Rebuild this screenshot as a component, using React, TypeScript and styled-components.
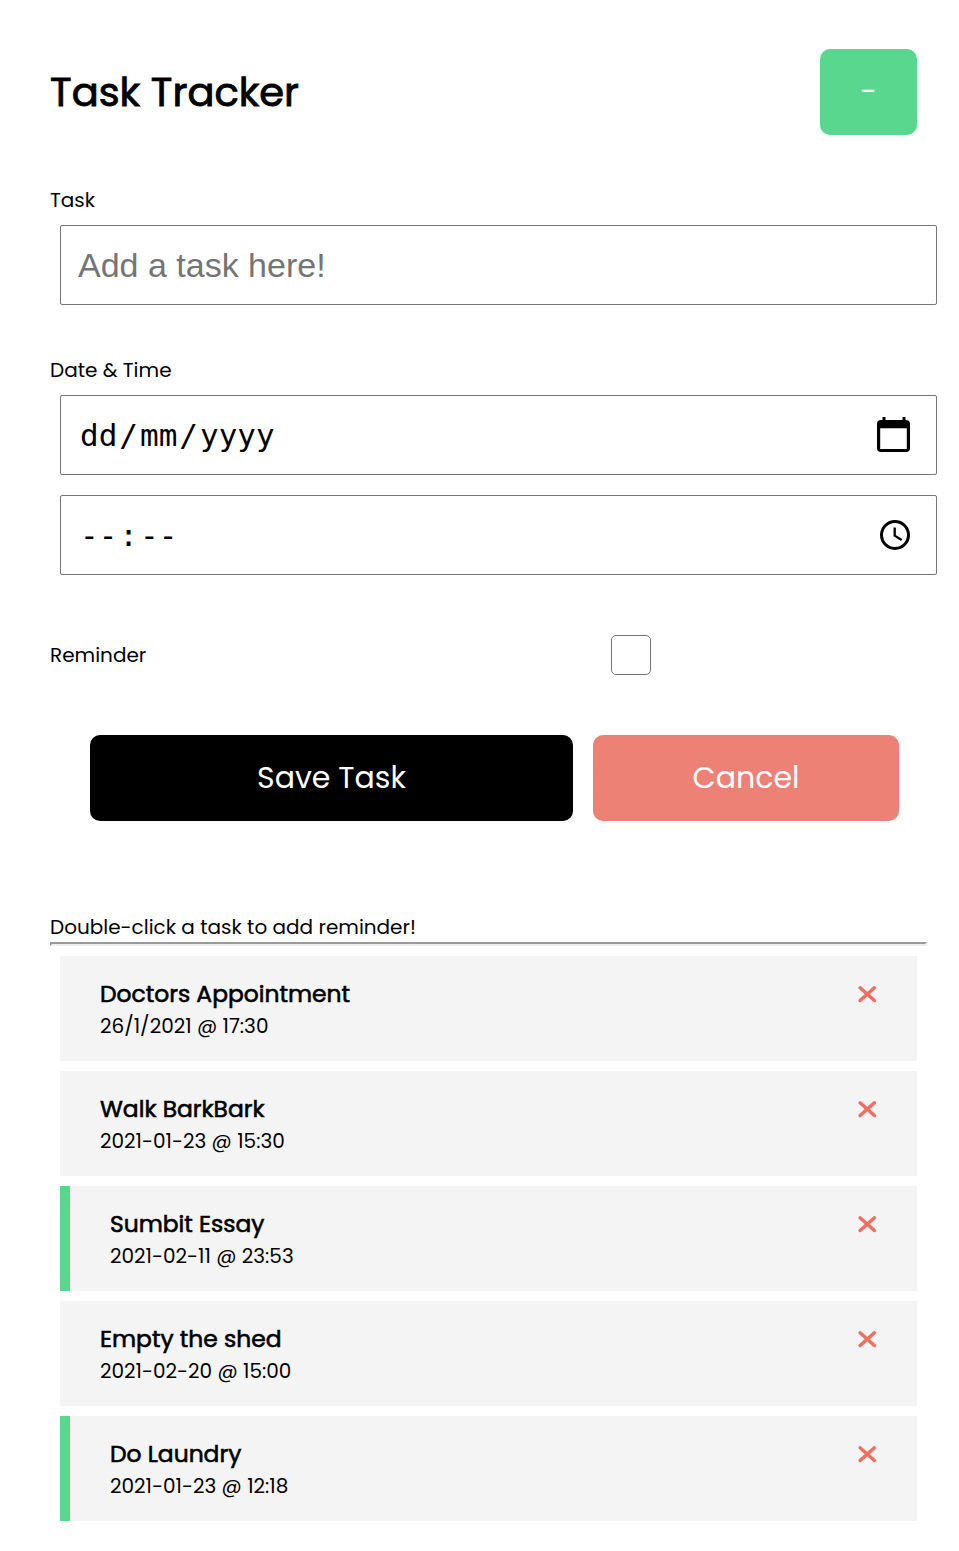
import React from "react";
import styled, { createGlobalStyle } from "styled-components";

const GlobalStyle = createGlobalStyle`
  *, *::before, *::after { box-sizing: border-box; }
  body {
    margin: 0;
    background: #fff;
    color: #000;
    font-family: Poppins, Inter, "Open Sans", sans-serif;
    font-weight: 400;
    font-size: 20px;
    line-height: 30px;
    font-feature-settings: "cv11";
  }
`;

const Page = styled.main`
  width: 959px;
  min-height: 1551px;
  padding: 49px 32px 30px 50px;
`;

const Header = styled.header`
  display: flex;
  align-items: center;
  justify-content: space-between;
  height: 86px;
  padding-right: 10px;
`;

const Title = styled.h1`
  margin: 0;
  font-size: 40px;
  line-height: 60px;
  font-weight: 400;
  -webkit-text-stroke: 0.9px #000;
`;

const Button = styled.button<{ $color: string; $width: number }>`
  width: ${(p) => p.$width}px;
  height: 86px;
  padding: 0;
  border: 0;
  border-radius: 10px;
  background: ${(p) => p.$color};
  color: #fff;
  font: inherit;
  font-size: 30px;
  font-weight: 400;
`;

const Form = styled.form`
  padding-top: 50px;
`;

const Field = styled.div`
  display: flex;
  flex-direction: column;
  width: 887px;
  margin-bottom: 50px;
`;

const Label = styled.label``;

const TextInput = styled.input`
  width: 877px;
  height: 80px;
  margin: 10px 0 0 10px;
  padding: 0 17px;
  border: 1px solid #767676;
  border-radius: 2px;
  font: 34px "Liberation Sans", Arial, sans-serif;
  &::placeholder { color: #757575; }
`;

const PickerInput = styled.div<{ $gap?: number }>`
  display: flex;
  align-items: center;
  justify-content: space-between;
  width: 877px;
  height: 80px;
  margin: ${(p) => p.$gap ?? 10}px 0 0 10px;
  padding: 0 25px 0 19px;
  border: 1px solid #767676;
  border-radius: 2px;
  font: 31px "DejaVu Sans Mono", monospace;
`;

const PickerText = styled.span`
  display: flex;
  gap: 2px;
  padding-bottom: 1px;
`;

const CalendarIcon = styled.svg`
  width: 36px;
  height: 38px;
  margin: 0 -1px 1px 0;
`;

const ReminderRow = styled.div`
  display: flex;
  align-items: center;
  height: 60px;
`;

const ReminderLabel = styled.label`
  width: 561.4px;
`;

const Checkbox = styled.input`
  appearance: none;
  width: 40px;
  height: 40px;
  margin: 0;
  border: 1px solid #767676;
  border-radius: 5px;
  background: #fff;
`;

const Actions = styled.div`
  display: flex;
  gap: 20px;
  padding: 50px 0 0 40px;
`;

const Hint = styled.p`
  margin: 91px 0 0;
`;

const Divider = styled.hr`
  width: 877px;
  height: 4px;
  margin: 0 0 10px;
  border: 2px solid;
  border-color: #9a9a9a #eee #eee #9a9a9a;
`;

const TaskList = styled.ul`
  display: flex;
  flex-direction: column;
  gap: 10px;
  width: 857px;
  margin: 0 0 0 10px;
  padding: 0;
  list-style: none;
`;

const TaskCard = styled.li<{ $reminder: boolean }>`
  display: flex;
  justify-content: space-between;
  align-items: flex-start;
  height: 105px;
  padding: 20px 40px;
  background: #f4f4f4;
  border-left: ${(p) => (p.$reminder ? "10px solid #5ad78f" : "0")};
`;

const TaskName = styled.h2`
  margin: 0;
  font-size: 23.4px;
  font-weight: 400;
  line-height: 35px;
  -webkit-text-stroke: 0.6px #000;
`;

const TaskDate = styled.p`
  margin: 0;
`;

const DeleteIcon = styled.svg`
  display: block;
  width: 20px;
  height: 18px;
  margin-top: 9px;
`;

const tasks = [
  { name: "Doctors Appointment", date: "26/1/2021 @ 17:30", reminder: false },
  { name: "Walk BarkBark", date: "2021-01-23 @ 15:30", reminder: false },
  { name: "Sumbit Essay", date: "2021-02-11 @ 23:53", reminder: true },
  { name: "Empty the shed", date: "2021-02-20 @ 15:00", reminder: false },
  { name: "Do Laundry", date: "2021-01-23 @ 12:18", reminder: true },
];

export default function App() {
  return (
    <>
      <GlobalStyle />
      <Page>
        <Header>
          <Title>Task Tracker</Title>
          <Button $color="#5ad78f" $width={97}>-</Button>
        </Header>
        <Form>
          <Field>
            <Label>Task</Label>
            <TextInput placeholder="Add a task here!" />
          </Field>
          <Field>
            <Label>Date &amp; Time</Label>
            <PickerInput>
              <PickerText><span>dd</span><span>/</span><span>mm</span><span>/</span><span>yyyy</span></PickerText>
              <CalendarIcon viewBox="0 0 36 38">
                <path d="M6.5 1h3v3h17V1h3v3h1A4 4 0 0 1 34 8v24a4 4 0 0 1-4 4H5a4 4 0 0 1-4-4V8a4 4 0 0 1 4-4h1.5zM4.2 12.2V33h26.6V12.2z" fillRule="evenodd" />
              </CalendarIcon>
            </PickerInput>
            <PickerInput $gap={20}>
              <PickerText><span>--</span><span>:</span><span>--</span></PickerText>
              <svg width="32" height="32" viewBox="0 0 32 32" fill="none" stroke="#000">
                <circle cx="16" cy="16" r="13.5" strokeWidth="3" />
                <path d="M15.7 8.5v8.2l7 4.2" strokeWidth="2.3" />
              </svg>
            </PickerInput>
          </Field>
          <ReminderRow>
            <ReminderLabel>Reminder</ReminderLabel>
            <Checkbox type="checkbox" />
          </ReminderRow>
          <Actions>
            <Button type="button" $color="#000" $width={483}>Save Task</Button>
            <Button type="button" $color="#ed8175" $width={306}>Cancel</Button>
          </Actions>
        </Form>
        <Hint>Double-click a task to add reminder!</Hint>
        <Divider />
        <TaskList>
          {tasks.map((t) => (
            <TaskCard key={t.name} $reminder={t.reminder}>
              <div>
                <TaskName>{t.name}</TaskName>
                <TaskDate>{t.date}</TaskDate>
              </div>
              <DeleteIcon viewBox="0 0 20 18" stroke="#ee6f61" strokeWidth="3.5" strokeLinecap="round">
                <path d="M3.1 2.8 17.4 15.5M17.4 2.8 3.1 15.5" />
              </DeleteIcon>
            </TaskCard>
          ))}
        </TaskList>
      </Page>
    </>
  );
}
